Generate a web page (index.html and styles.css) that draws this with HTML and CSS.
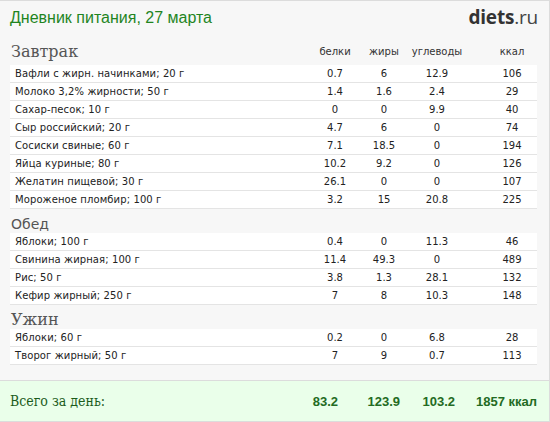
FILE: index.html
```html
<!DOCTYPE html>
<html lang="ru">
<head>
<meta charset="utf-8">
<title>Дневник питания</title>
<link rel="stylesheet" href="styles.css">
</head>
<body>
<div class="page">
  <header class="top">
    <h1 class="title">Дневник питания, 27 марта</h1>
    <div class="logo"><b>diets</b>.ru</div>
  </header>

  <div class="grid colhead">
    <div class="meal serif">Завтрак</div>
    <div class="num">белки</div>
    <div class="num">жиры</div>
    <div class="num">углеводы</div>
    <div class="num kc">ккал</div>
  </div>
  <div class="rows">
    <div class="grid row"><div class="name">Вафли с жирн. начинками; 20 г</div><div class="num">0.7</div><div class="num">6</div><div class="num">12.9</div><div class="num kc">106</div></div>
    <div class="grid row"><div class="name">Молоко 3,2% жирности; 50 г</div><div class="num">1.4</div><div class="num">1.6</div><div class="num">2.4</div><div class="num kc">29</div></div>
    <div class="grid row"><div class="name">Сахар-песок; 10 г</div><div class="num">0</div><div class="num">0</div><div class="num">9.9</div><div class="num kc">40</div></div>
    <div class="grid row"><div class="name">Сыр российский; 20 г</div><div class="num">4.7</div><div class="num">6</div><div class="num">0</div><div class="num kc">74</div></div>
    <div class="grid row"><div class="name">Сосиски свиные; 60 г</div><div class="num">7.1</div><div class="num">18.5</div><div class="num">0</div><div class="num kc">194</div></div>
    <div class="grid row"><div class="name">Яйца куриные; 80 г</div><div class="num">10.2</div><div class="num">9.2</div><div class="num">0</div><div class="num kc">126</div></div>
    <div class="grid row"><div class="name">Желатин пищевой; 30 г</div><div class="num">26.1</div><div class="num">0</div><div class="num">0</div><div class="num kc">107</div></div>
    <div class="grid row"><div class="name">Мороженое пломбир; 100 г</div><div class="num">3.2</div><div class="num">15</div><div class="num">20.8</div><div class="num kc">225</div></div>
  </div>

  <div class="meal-head sans">Обед</div>
  <div class="rows">
    <div class="grid row"><div class="name">Яблоки; 100 г</div><div class="num">0.4</div><div class="num">0</div><div class="num">11.3</div><div class="num kc">46</div></div>
    <div class="grid row"><div class="name">Свинина жирная; 100 г</div><div class="num">11.4</div><div class="num">49.3</div><div class="num">0</div><div class="num kc">489</div></div>
    <div class="grid row"><div class="name">Рис; 50 г</div><div class="num">3.8</div><div class="num">1.3</div><div class="num">28.1</div><div class="num kc">132</div></div>
    <div class="grid row"><div class="name">Кефир жирный; 250 г</div><div class="num">7</div><div class="num">8</div><div class="num">10.3</div><div class="num kc">148</div></div>
  </div>

  <div class="meal-head serif">Ужин</div>
  <div class="rows">
    <div class="grid row"><div class="name">Яблоки; 60 г</div><div class="num">0.2</div><div class="num">0</div><div class="num">6.8</div><div class="num kc">28</div></div>
    <div class="grid row"><div class="name">Творог жирный; 50 г</div><div class="num">7</div><div class="num">9</div><div class="num">0.7</div><div class="num kc">113</div></div>
  </div>

  <div class="total">
    <div class="grid total-row">
      <div class="total-label">Всего за день:</div>
      <div class="tv t1">83.2</div>
      <div class="tv t2">123.9</div>
      <div class="tv t3">103.2</div>
      <div class="tv t4">1857 ккал</div>
    </div>
  </div>
</div>
</body>
</html>
```

FILE: styles.css
```css
html, body {
  margin: 0;
  padding: 0;
  background: #f7f7f7;
}

.page {
  box-sizing: border-box;
  width: 550px;
  height: 422px;
  border-top: 1px solid #dcdcdc;
  border-right: 1px solid #dcdcdc;
  border-bottom: 1px solid #dcdcdc;
  background: #f7f7f7;
  display: flex;
  flex-direction: column;
  font-family: "DejaVu Sans", Verdana, sans-serif;
  font-size: 10px;
  color: #222;
}

.top {
  height: 39px;
  display: flex;
  justify-content: space-between;
  align-items: flex-start;
  padding: 0 11px 0 10px;
}

.title {
  margin: 7px 0 0 0;
  font-family: "Liberation Sans", Arial, sans-serif;
  font-weight: normal;
  font-size: 16px;
  line-height: 20px;
  color: #1f851f;
}

.logo {
  margin-top: 4px;
  font-family: "Open Sans", sans-serif;
  font-size: 19px;
  line-height: 24px;
  color: #444;
  letter-spacing: -0.2px;
}

.logo b {
  font-weight: 700;
  color: #333;
}

.grid {
  display: grid;
  grid-template-columns: 1fr 50px 48px 58px 71px;
  margin: 0 12px 0 10px;
}

.colhead {
  height: 25px;
  align-items: end;
}

.colhead .num {
  padding-bottom: 7px;
  line-height: 13px;
  color: #333;
}

.meal {
  padding-left: 1px;
  padding-bottom: 4px;
  font-size: 16px;
  line-height: 18px;
  color: #555;
}

.serif {
  font-family: "DejaVu Serif", Georgia, serif;
}

.sans {
  font-family: "DejaVu Sans", Verdana, sans-serif;
}

.meal-head {
  height: 24px;
  box-sizing: border-box;
  padding: 6px 0 0 11px;
  font-size: 16px;
  line-height: 18px;
  color: #555;
}

.meal-head.sans {
  font-size: 14px;
}

.row {
  background: #fff;
  height: 17px;
  line-height: 17px;
  border-bottom: 1px solid #e4e4e4;
}

.name {
  padding-left: 5px;
  white-space: nowrap;
  letter-spacing: 0.1px;
}

.num {
  text-align: center;
}

.kc {
  padding-left: 21px;
}

.total {
  margin-top: auto;
  height: 40px;
  border-top: 1px solid #dcdcdc;
  background: #eaffea;
  display: flex;
  align-items: center;
}

.total-row {
  flex: 1;
  align-items: center;
}

.total-label {
  font-family: "DejaVu Serif", Georgia, serif;
  font-stretch: condensed;
  font-size: 14px;
  color: #1c5c1c;
}

.tv {
  text-align: right;
  font-family: "Liberation Sans", Arial, sans-serif;
  font-weight: bold;
  font-size: 13px;
  color: #236b23;
  white-space: nowrap;
}

.t1 { padding-right: 22px; }
.t2 { padding-right: 8px; }
.t3 { padding-right: 11px; }
.t4 { padding-right: 0; }
```
